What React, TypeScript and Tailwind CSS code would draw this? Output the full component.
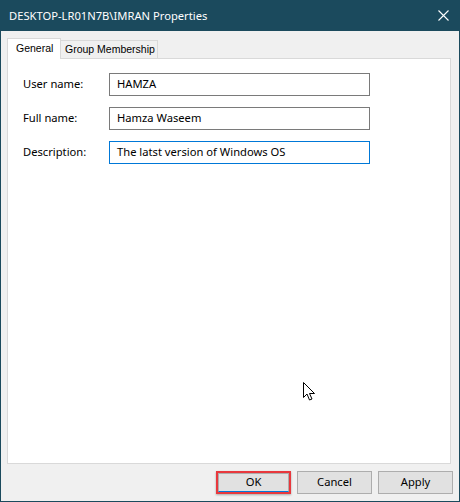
import React from "react";

const fields = [
  { label: "User name:", value: "HAMZA", focused: false },
  { label: "Full name:", value: "Hamza Waseem", focused: false },
  { label: "Description:", value: "The latst version of Windows OS", focused: true },
];

export default function App() {
  return (
    <div
      className="relative w-[460px] h-[502px] flex flex-col bg-[#f0f0f0] border-l border-r border-b border-[#1b4a5d] text-[11.2px] text-black overflow-hidden whitespace-nowrap"
      style={{ fontFamily: '"Noto Sans", "Open Sans", sans-serif' }}
    >
      {/* Title bar */}
      <div className="h-[31px] shrink-0 bg-[#1b4a5d] flex items-center justify-between pl-[8px] pr-[9px] text-white">
        <span className="text-[11.2px] leading-none">DESKTOP-LR01N7B\IMRAN Properties</span>
        <svg width="11" height="11" viewBox="0 0 11 11" className="mr-[1px]">
          <path d="M0.5 0.5 L10.5 10.5 M10.5 0.5 L0.5 10.5" stroke="#ffffff" strokeWidth="1.1" />
        </svg>
      </div>

      {/* Body */}
      <div className="flex-1 flex flex-col pl-[6px] pr-[8px] pt-[7px]">
        {/* Tabs */}
        <div className="flex items-end h-[20px] relative z-10 font-['Liberation_Sans',Arial,sans-serif] text-[10.5px]">
          <div className="h-[21px] w-[54px] bg-white border border-b-0 border-[#d9d9d9] flex items-center pl-[8px] mb-[-1px]">
            General
          </div>
          <div className="h-[18px] w-[97px] bg-[#f0f0f0] border border-l-0 border-b-0 border-[#d9d9d9] flex items-center pl-[4px]">
            Group Membership
          </div>
        </div>

        {/* Panel */}
        <div className="h-[406px] bg-white border border-[#d9d9d9] pt-[14px] pl-[15px] flex flex-col gap-[11px]">
          {fields.map((f) => (
            <div key={f.label} className="flex items-center h-[23px]">
              <span className="w-[86px]">{f.label}</span>
              <div
                className={`w-[261px] h-[23px] border flex items-center pl-[7px] ${
                  f.focused ? "border-[#0078d7]" : "border-[#7a7a7a]"
                }`}
              >
                {f.value}
              </div>
            </div>
          ))}
        </div>

        {/* Buttons */}
        <div className="flex justify-end gap-[6px] pt-[7px] mr-[-2px]">
          <div className="w-[75px] h-[23px] border-2 border-[#e8383d] shadow-[0_1px_2px_rgba(0,0,0,0.3)]">
            <div className="w-full h-full bg-[#e1e1e1] border border-[#adadad] border-b-[#0078d7] flex items-center justify-center">
              OK
            </div>
          </div>
          <div className="w-[75px] h-[23px] bg-[#e1e1e1] border border-[#adadad] flex items-center justify-center">
            Cancel
          </div>
          <div className="w-[75px] h-[23px] bg-[#e1e1e1] border border-[#adadad] flex items-center justify-center">
            Apply
          </div>
        </div>
      </div>

      {/* Mouse cursor */}
      <svg width="13" height="20" viewBox="0 0 13 20" className="absolute left-[302px] top-[382px]">
        <path
          d="M0.5 0.5 L0.5 15.5 L4 12 L6.5 18 L9 17 L6.5 11.5 L11.5 11.5 Z"
          fill="#ffffff"
          stroke="#000000"
          strokeWidth="1"
          strokeLinejoin="miter"
        />
      </svg>
    </div>
  );
}
